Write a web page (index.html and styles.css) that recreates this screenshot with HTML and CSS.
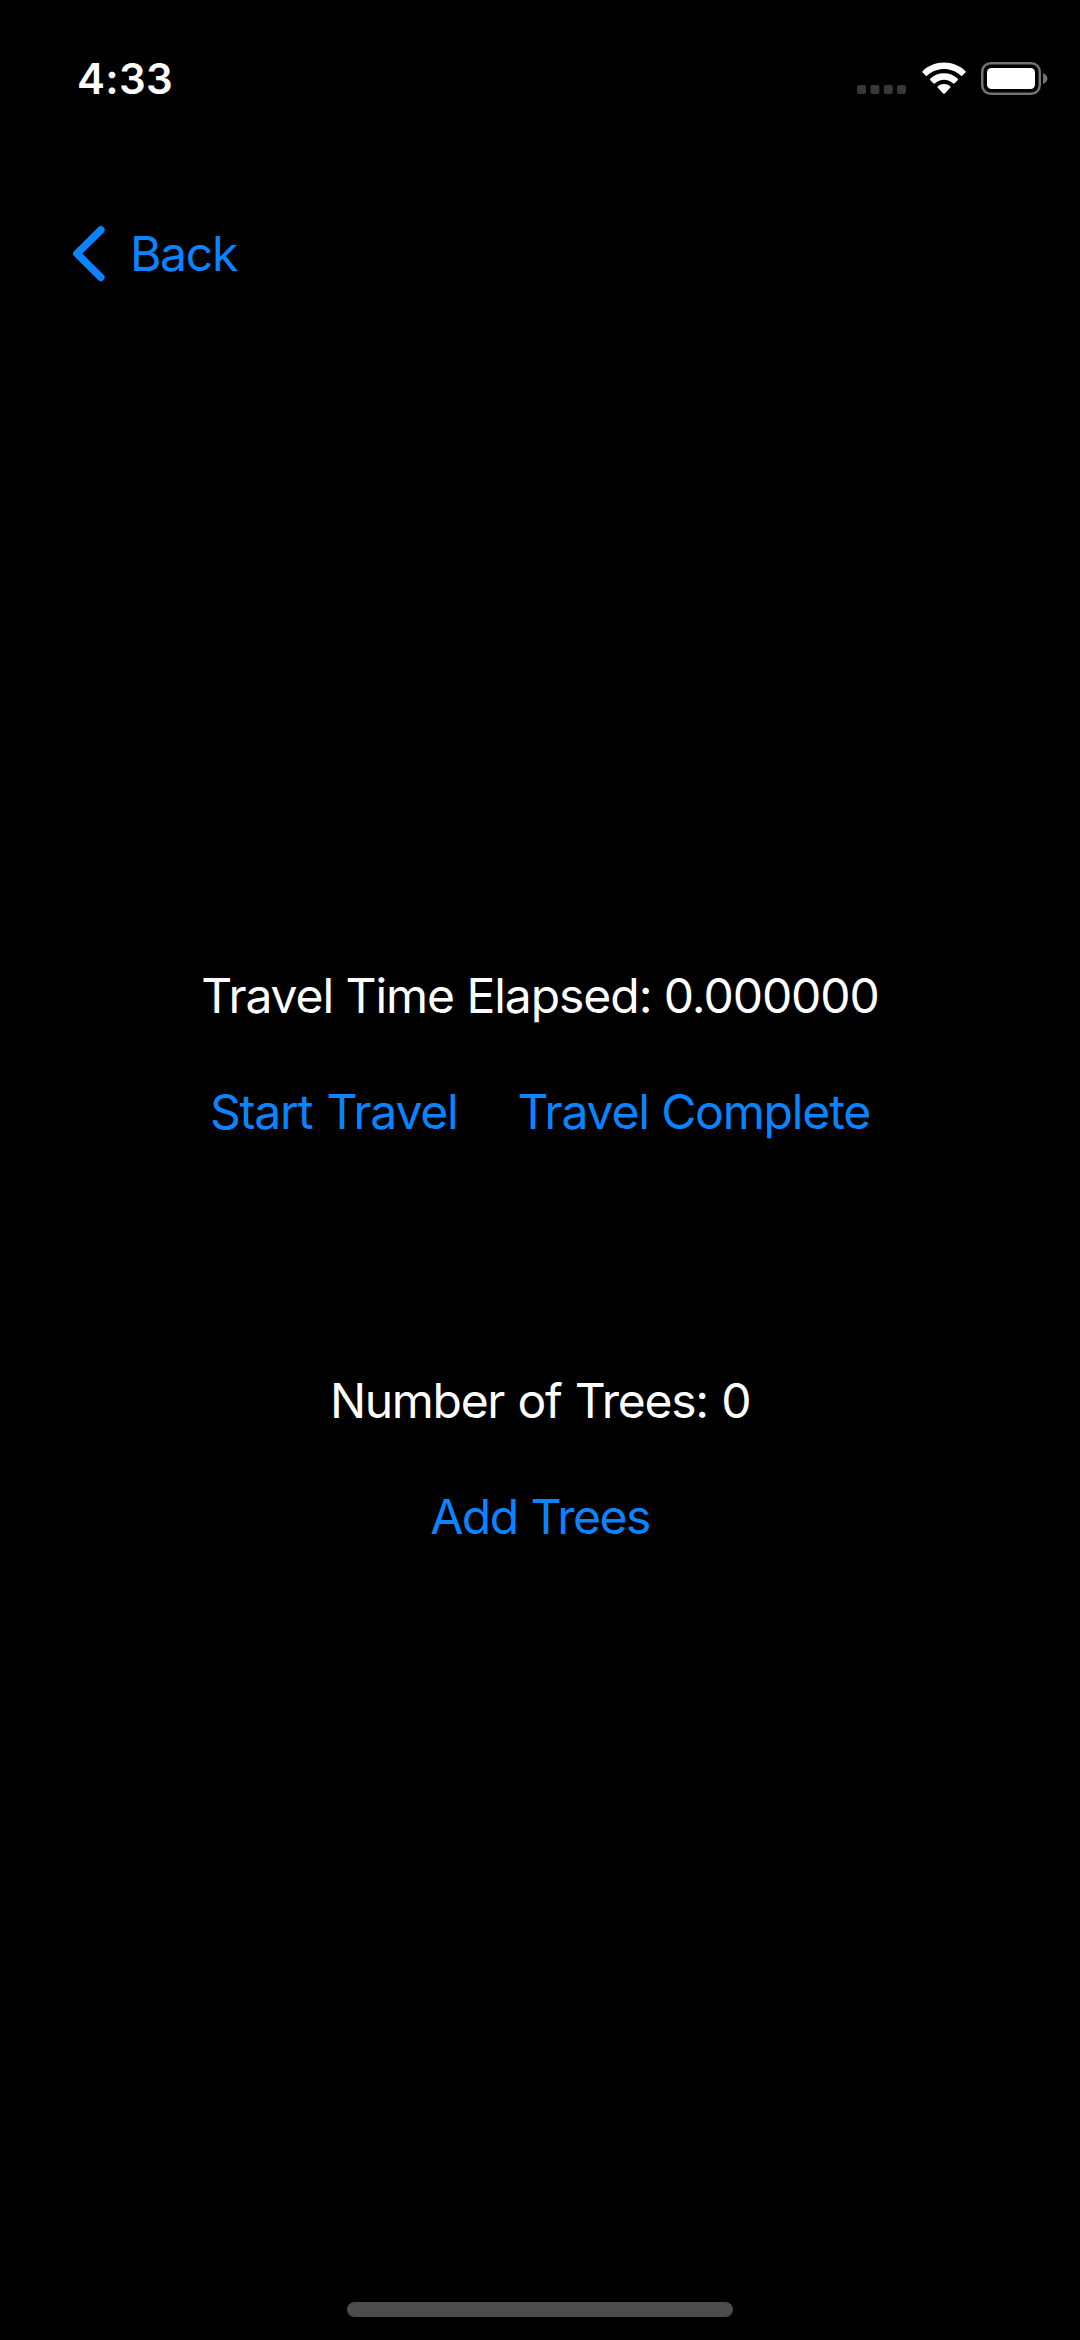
FILE: index.html
```html
<!DOCTYPE html>
<html lang="en">
<head>
<meta charset="utf-8">
<title>Travel</title>
<link rel="stylesheet" href="styles.css">
</head>
<body>
<div class="screen">
  <header class="status-bar">
    <span class="clock">4:33</span>
    <div class="indicators">
      <svg class="signal" width="49" height="9" viewBox="0 0 49 9" fill="#383838">
        <rect width="9" height="9" rx="2"/><rect x="13.4" width="9" height="9" rx="2"/><rect x="26.8" width="9" height="9" rx="2"/><rect x="40" width="9" height="9" rx="2"/>
      </svg>
      <svg class="wifi" width="44" height="33" viewBox="0 0 44 33" fill="#fff">
        <path d="M22 0.5C30 0.5 37.8 3.6 43.3 8.9Q44.1 9.8 43.3 10.6L40.5 13.5Q39.6 14.3 38.7 13.5C34.2 9.2 28.2 6.9 22 6.9S9.8 9.2 5.3 13.5Q4.4 14.3 3.5 13.5L0.7 10.6Q-0.1 9.8 0.7 8.9C6.2 3.6 14 0.5 22 0.5Z"/>
        <path d="M22 11.2C27.1 11.2 31.9 13.1 35.6 16.5Q36.5 17.4 35.7 18.2L32.6 21.3Q31.8 22.1 30.9 21.3C28.5 19.1 25.4 17.8 22 17.8S15.5 19.1 13.1 21.3Q12.2 22.1 11.4 21.3L8.3 18.2Q7.5 17.4 8.4 16.5C12.1 13.1 16.9 11.2 22 11.2Z"/>
        <path d="M22 22C24.3 22 26.5 22.8 28.2 24.2Q29 25 28.2 25.8L22.8 31.5Q22 32.4 21.2 31.5L15.8 25.8Q15 25 15.8 24.2C17.5 22.8 19.7 22 22 22Z"/>
      </svg>
      <svg class="battery" width="67" height="33" viewBox="0 0 67 33">
        <rect x="1.25" y="1.25" width="57.5" height="30.5" rx="8.5" fill="none" stroke="#737373" stroke-width="2.5"/>
        <rect x="6" y="6" width="48" height="21" rx="4.5" fill="#fff"/>
        <path d="M62 11C64.5 12 66.5 14 66.5 16.5S64.5 21 62 22Z" fill="#737373"/>
      </svg>
    </div>
  </header>
  <nav class="nav-bar">
    <a class="back">
      <svg width="32" height="56" viewBox="0 0 32 56" fill="none" stroke="#0a84ff" stroke-width="7.5" stroke-linecap="round" stroke-linejoin="round"><path d="M27.8 4L3.9 27.6L27.8 51.3"/></svg>
      <span class="back-label">Back</span>
    </a>
  </nav>
  <main class="content">
    <section class="group travel">
      <p class="label elapsed">Travel Time Elapsed: 0.000000</p>
      <div class="actions">
        <a class="action start">Start Travel</a>
        <a class="action complete">Travel Complete</a>
      </div>
    </section>
    <section class="group trees">
      <p class="label count">Number of Trees: 0</p>
      <a class="action add">Add Trees</a>
    </section>
  </main>
  <footer class="home-area"><div class="home-indicator"></div></footer>
</div>
</body>
</html>
```
FILE: styles.css
```css
* { box-sizing: border-box; }

body {
  margin: 0;
  background: #000;
  color: #fff;
  font-family: Inter, "Liberation Sans", sans-serif;
  font-size: 48px;
  line-height: 58px;
  letter-spacing: -1.2px;
}

svg { display: block; }

.screen {
  display: flex;
  flex-direction: column;
  height: 2340px;
  overflow: hidden;
}

.status-bar {
  display: flex;
  justify-content: space-between;
  height: 200px;
  padding: 53px 32px 0 77px;
}

.clock {
  font-size: 42px;
  font-weight: 600;
  line-height: 52px;
  letter-spacing: 0.3px;
}

.indicators {
  display: flex;
  align-items: flex-end;
  height: 42px;
}

.signal { margin: 0 16px 1px 0; }
.wifi { margin-right: 15px; }

.nav-bar {
  height: 110px;
  padding: 25px 0 0 73px;
}

.back {
  display: inline-flex;
  align-items: center;
  gap: 25px;
  color: #0a84ff;
}

.back-label { letter-spacing: -1.3px; }

.content {
  flex: 1;
  display: flex;
  flex-direction: column;
  gap: 231px;
  padding-top: 657px;
}

.group {
  display: flex;
  flex-direction: column;
  align-items: center;
  gap: 58px;
}

.label { margin: 0; white-space: nowrap; }
.elapsed { letter-spacing: -1.05px; }
.count { letter-spacing: -1.3px; word-spacing: 1.2px; }
.start { word-spacing: 2px; }
.complete { letter-spacing: -1.15px; }
.add { letter-spacing: -1.5px; word-spacing: 1px; }

.actions {
  display: flex;
  gap: 60px;
}

.action {
  color: #0a84ff;
  white-space: nowrap;
}

.home-area {
  display: flex;
  justify-content: center;
  padding-bottom: 23px;
}

.home-indicator {
  width: 386px;
  height: 15px;
  border-radius: 8px;
  background: #4d4d4d;
}
```
